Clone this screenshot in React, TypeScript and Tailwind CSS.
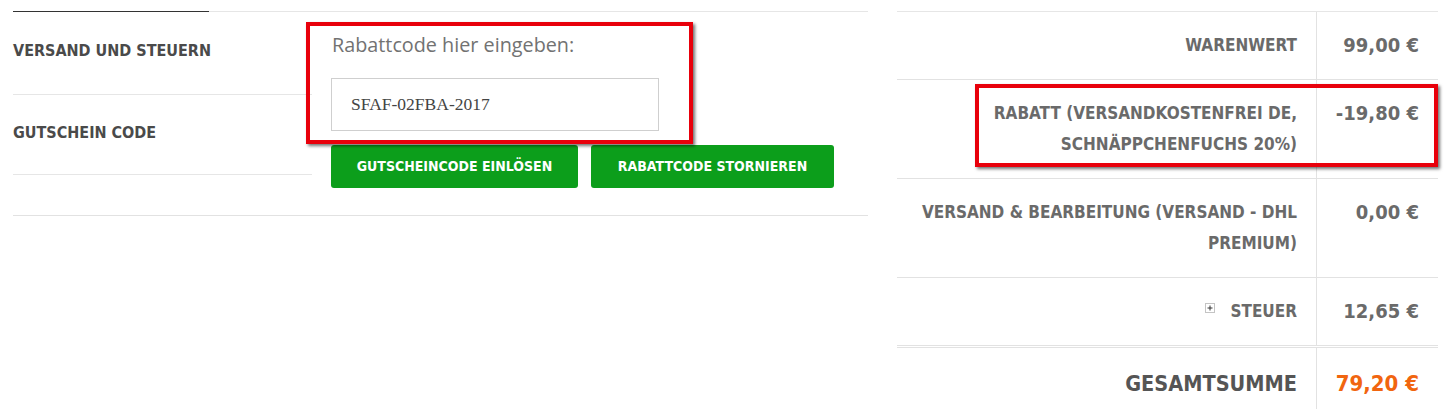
import React from "react";

const cond = "font-['DejaVu_Sans_Condensed','DejaVu_Sans',sans-serif] font-bold";

const rows = [
  { label: ["WARENWERT"], value: "99,00 €" },
  { label: ["RABATT (VERSANDKOSTENFREI DE,", "SCHNÄPPCHENFUCHS 20%)"], value: "-19,80 €" },
  { label: ["VERSAND & BEARBEITUNG (VERSAND - DHL", "PREMIUM)"], value: "0,00 €" },
  { label: ["STEUER"], value: "12,65 €", toggle: true },
];

function ToggleIcon() {
  return (
    <svg width="10" height="10" viewBox="0 0 10 10" className="mr-[15px] -mt-[8px]">
      <rect x="0.5" y="0.5" width="9" height="9" fill="none" stroke="#888" strokeWidth="1" strokeDasharray="1 1" />
      <path d="M5 2.5v5M2.5 5h5" stroke="#333" strokeWidth="1" />
    </svg>
  );
}

export default function App() {
  return (
    <div className="relative w-[1449px] h-[409px] overflow-hidden bg-white">
      <div className="flex pt-[11px]">
        {/* left: shipping / coupon tabs */}
        <section className="ml-[13px] w-[855px]">
          <div className="flex h-px">
            <div className="w-[196px] bg-[#333]" />
            <div className="flex-1 bg-[#e6e6e6]" />
          </div>
          <div className="flex border-b border-[#e2e2e2]">
            <ul className={`w-[299px] text-[16px] leading-[24px] text-[#4a4a4a] ${cond}`}>
              <li className="h-[83px] pt-[27px] border-b border-[#e6e6e6]">VERSAND UND STEUERN</li>
              <li className="h-[80px] pt-[26px] border-b border-[#e6e6e6]">GUTSCHEIN CODE</li>
            </ul>
            <div className="ml-[19px] pt-[21px] pb-[27px]">
              <label className="block font-['Open_Sans',sans-serif] text-[19.8px] leading-[24px] text-[#727272] pl-px">
                Rabattcode hier eingeben:
              </label>
              <div className="mt-[21px] w-[328px] h-[53px] border border-[#cfcfcf] flex items-center pl-[19px] font-['Liberation_Serif',serif] text-[17.5px] text-[#444]">
                SFAF-02FBA-2017
              </div>
              <div className={`mt-[14px] flex gap-[13px] text-[14px] text-white ${cond}`}>
                <button className="w-[247px] h-[43px] rounded-[3px] bg-[#0c9e1b]">GUTSCHEINCODE EINLÖSEN</button>
                <button className="w-[243px] h-[43px] rounded-[3px] bg-[#0c9e1b]">RABATTCODE STORNIEREN</button>
              </div>
            </div>
          </div>
        </section>

        {/* right: totals */}
        <section className={`ml-[29px] w-[541px] border-t border-[#e6e6e6] ${cond}`}>
          {rows.map((r, i) => (
            <div
              key={i}
              className={`grid grid-cols-[1fr_122px] ${i === rows.length - 1 ? "border-b-[3px] border-double" : "border-b"} border-[#e2e2e2]`}
            >
              <div className="py-[18px] pr-[19px] text-right text-[17px] leading-[31px] text-[#6a6a6a]">
                {r.toggle ? (
                  <div className="flex h-[31px] items-center justify-end">
                    <ToggleIcon />
                    {r.label[0]}
                  </div>
                ) : (
                  r.label.map((l, j) => <div key={j}>{l}</div>)
                )}
              </div>
              <div className="border-l border-[#e2e2e2] py-[18px] pr-[19px] text-right text-[20px] leading-[31px] text-[#6a6a6a]">
                {r.value}
              </div>
            </div>
          ))}
          <div className="grid grid-cols-[1fr_122px]">
            <div className="pt-[18px] pb-[20px] pr-[19px] text-right text-[21.5px] leading-[36px] text-[#555]">GESAMTSUMME</div>
            <div className="border-l border-[#e2e2e2] pt-[18px] pb-[20px] pr-[19px] text-right text-[22px] leading-[36px] text-[#f1650f]">
              79,20 €
            </div>
          </div>
        </section>
      </div>

      {/* red annotation frames */}
      <div className="absolute left-[306px] top-[22px] w-[387px] h-[122px] border-4 border-[#e8000b] shadow-[2px_2px_3px_rgba(0,0,0,0.55)]" />
      <div className="absolute left-[975px] top-[84px] w-[463px] h-[83px] border-4 border-[#e8000b] shadow-[2px_2px_3px_rgba(0,0,0,0.55)]" />
    </div>
  );
}
